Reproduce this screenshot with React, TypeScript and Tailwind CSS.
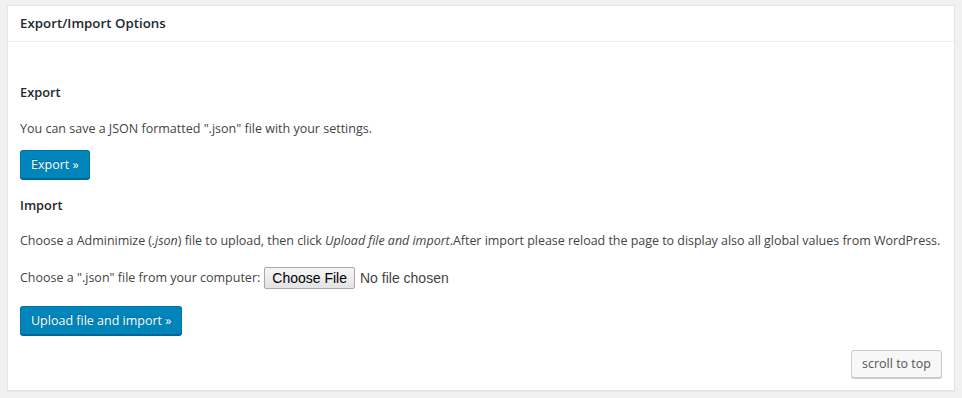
import React from 'react'

const font = { fontFamily: '"Open Sans", "Noto Sans", sans-serif' }

function PrimaryButton({ children }: { children: React.ReactNode }) {
  return (
    <button
      type="button"
      className="h-[29px] px-[10px] rounded-[3px] border border-[#0073aa] border-b-[#006799] bg-[#0085ba] text-white text-[12.5px] leading-[26px] shadow-[0_1px_0_#006799] [text-shadow:0_-1px_1px_#006799]"
    >
      {children}
    </button>
  )
}

function App() {
  return (
    <div className="w-[962px] h-[398px] bg-[#f1f1f1] pt-[5px] pl-[7px]" style={font}>
      <div className="w-[948px] h-[386px] bg-white border border-[#e5e5e5] shadow-[0_1px_1px_rgba(0,0,0,0.04)] flex flex-col">
        <div className="h-[36px] border-b border-[#eeeeee] px-3 flex items-center">
          <h2 className="text-[13.3px] font-semibold text-[#23282d]">Export/Import Options</h2>
        </div>
        <div className="flex-1 px-3 pt-[40px] pb-3 flex flex-col text-[12.5px] text-[#444]">
          <h3 className="text-[12.8px] font-semibold leading-[20px] text-[#23282d]">Export</h3>
          <p className="mt-[17px] leading-[20px]">You can save a JSON formatted ".json" file with your settings.</p>
          <div className="mt-[11px]">
            <PrimaryButton>Export »</PrimaryButton>
          </div>
          <h3 className="mt-[16px] text-[12.8px] font-semibold leading-[20px] text-[#23282d]">Import</h3>
          <p className="mt-[16px] leading-[20px] whitespace-nowrap tracking-[-0.03px]">
            Choose a Adminimize (<em>.json</em>) file to upload, then click <em>Upload file and import</em>.After import please reload the page to display also all global values from WordPress.
          </p>
          <div className="mt-[16px] h-[22px] flex items-center">
            <span>Choose a ".json" file from your computer:</span>
            <span className="ml-[4px] flex items-center" style={{ fontFamily: '"Liberation Sans", Arial, sans-serif' }}>
              <span className="h-[22px] px-[7px] flex items-center border border-[#a9a9a9] rounded-[2px] bg-[linear-gradient(#f6f6f6,#e3e3e3)] text-[14px] text-black">
                Choose File
              </span>
              <span className="ml-[5px] text-[14px] text-[#444]">No file chosen</span>
            </span>
          </div>
          <div className="mt-[17px]">
            <PrimaryButton>Upload file and import »</PrimaryButton>
          </div>
          <div className="mt-auto flex justify-end">
            <button
              type="button"
              className="h-[28px] px-[10px] rounded-[3px] border border-[#cccccc] bg-[#f7f7f7] text-[#555] text-[12.5px] leading-[26px] shadow-[0_1px_0_#cccccc]"
            >
              scroll to top
            </button>
          </div>
        </div>
      </div>
    </div>
  )
}

export default App
